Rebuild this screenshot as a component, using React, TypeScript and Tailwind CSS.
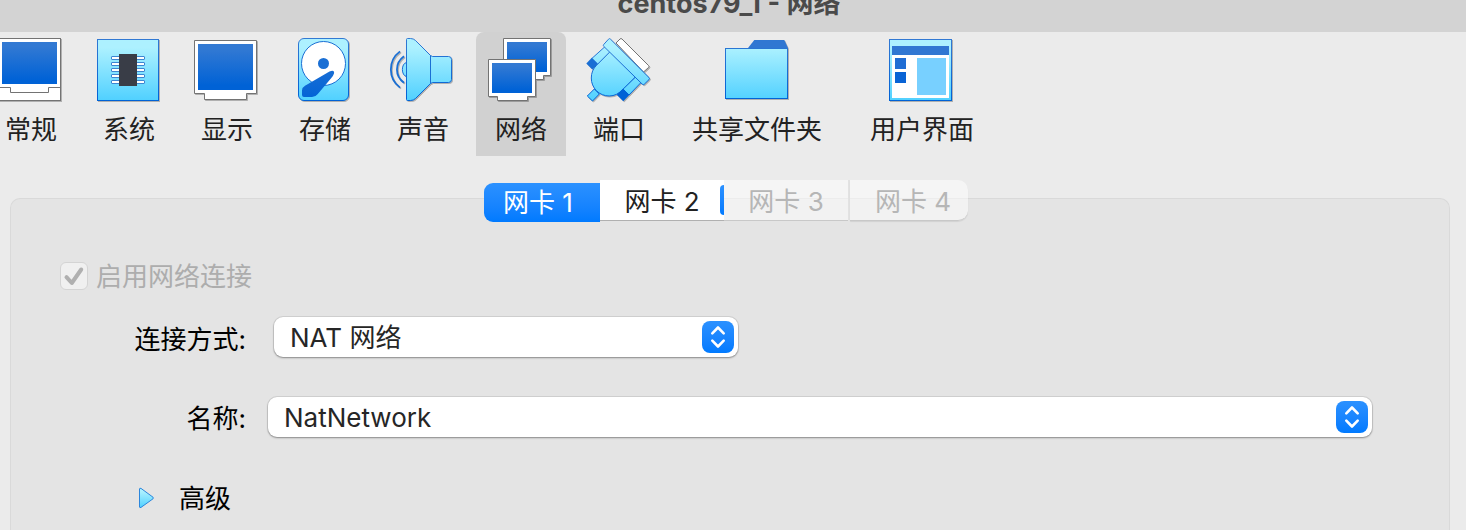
import { useState, type ReactNode } from "react";

const LINE = "#1a6fd4";

function Icon({ children }: { children: ReactNode }) {
  return (
    <svg
      width="64"
      height="64"
      viewBox="0 0 64 64"
      fill="none"
      aria-hidden="true"
      className="shrink-0 overflow-visible drop-shadow-[1px_1px_0px_rgba(0,0,0,0.25)]"
    >
      {children}
    </svg>
  );
}

function Gradients() {
  return (
    <svg width="0" height="0" className="absolute" aria-hidden="true">
      <defs>
        <linearGradient id="sky" gradientUnits="userSpaceOnUse" x1="0" y1="0" x2="0" y2="63">
          <stop offset="0.15" stopColor="#adf1ff" />
          <stop offset="1" stopColor="#4fd0ff" />
        </linearGradient>
        <linearGradient id="edge" gradientUnits="userSpaceOnUse" x1="0" y1="0" x2="0" y2="63">
          <stop offset="0" stopColor="#3279d3" />
          <stop offset="1" stopColor="#0062d6" />
        </linearGradient>
        <linearGradient id="screen" x1="0" y1="0" x2="0" y2="1">
          <stop offset="0.1" stopColor="#3279d3" />
          <stop offset="0.9" stopColor="#0062d6" />
        </linearGradient>
      </defs>
    </svg>
  );
}

function GeneralIcon() {
  return (
    <Icon>
      <rect x="0.5" y="0.5" width="61" height="62" fill="#fff" stroke="#737373" />
      <rect x="3" y="4" width="55" height="42" fill="url(#screen)" />
      <path d="M1 49.5H11.5V54.5H49.5V49.5H61" stroke="#737373" />
    </Icon>
  );
}

function SystemIcon() {
  return (
    <Icon>
      <rect x="0.5" y="1.5" width="61" height="61" fill="url(#sky)" stroke="url(#edge)" />
      {[20, 26, 32, 38, 44].map((y) => (
        <rect key={y} x="14.5" y={y - 1.5} width="33" height="3" rx="0.5" fill="#fff" stroke="#3c86d2" />
      ))}
      <rect x="22" y="16" width="18" height="32" fill="#393d47" />
    </Icon>
  );
}

function DisplayIcon() {
  return (
    <Icon>
      <path d="M-0.5 2.5H61.5V55.5H51.5V61.5H9.5V55.5H-0.5Z" fill="#fff" stroke="#737373" />
      <rect x="3" y="6" width="55" height="46" fill="url(#screen)" />
    </Icon>
  );
}

function StorageIcon() {
  return (
    <Icon>
      <rect x="5.5" y="0.5" width="50" height="62" rx="5.5" fill="url(#sky)" stroke="url(#edge)" />
      <circle cx="30.5" cy="25.5" r="22" fill="#fff" stroke={LINE} />
      <circle cx="30.5" cy="25.5" r="5.5" fill={LINE} />
      <path
        d="M36.5 33.4Q41.8 31.5 41 35.5Q40.4 37.5 38.5 39.8L24.8 56Q22.6 59 19 59H11Q9 59 9 57V52.5Q9 49.5 12 47.8Z"
        fill="url(#edge)"
      />
    </Icon>
  );
}

function AudioIcon() {
  return (
    <Icon>
      <g strokeWidth="1.8" stroke={LINE}>
        <path d="M9 13.4C-3.2 22.5 -3.2 40.5 9 49.6" />
        <path d="M13 18.2C3.6 25 3.6 38 13 44.8" />
      </g>
      <path d="M15.5 24.5C10 25.5 10 37.5 15.5 38.5" fill="url(#sky)" stroke={LINE} />
      <path
        d="M16.5 0.5H19.5Q22.5 0.5 24.5 2.5L39.5 17.5L41.5 18.5H57.5Q60.5 18.5 60.5 21.5V41.5Q60.5 44.5 57.5 44.5H41.5L39.5 45.5L24.5 60.5Q22.5 62.5 19.5 62.5H16.5Q15.5 62.5 15.5 61.5V1.5Q15.5 0.5 16.5 0.5Z"
        fill="url(#sky)"
        stroke="url(#edge)"
      />
      <path d="M39.5 17.5V45.5" stroke={LINE} />
    </Icon>
  );
}

function NetworkIcon() {
  return (
    <Icon>
      <path d="M14.5 0.5H61.5V37.5H54.5V41.5H22.5V37.5H14.5Z" fill="#fff" stroke="#737373" />
      <rect x="18" y="4" width="40" height="30" fill="url(#screen)" />
      <path d="M-0.5 21.5H46.5V58.5H38.5V62.5H8.5V58.5H-0.5Z" fill="#fff" stroke="#737373" />
      <rect x="3" y="25" width="40" height="30" fill="url(#screen)" />
    </Icon>
  );
}

function PortsIcon() {
  return (
    <Icon>
      <path
        d="M29 5L33 1Q34 0 35 1L61.5 27.5Q62.5 28.5 61.5 29.5L56.5 34Z"
        fill="#fff"
        stroke="#737373"
      />
      <g stroke="url(#edge)" fill="url(#sky)">
        <path d="M7.3 51L12.3 56L5.5 63L0.3 58Z" />
        <path d="M18.7 8L24 13L10.7 26.5L4.8 20.5Z" />
        <path d="M49 38.5L54.5 44L42 57L36 51Z" />
        <path d="M23 13.7L9.6 27.2A17.8 17.8 0 0 0 4.3 40A17.8 17.8 0 0 0 22.2 58Q30 58 36 51.2L48.5 38.8Z" />
        <path d="M16.8 6.4L21.5 1.2Q22.5 0 23.5 1.2L62 39.6Q63 40.6 62 41.6L57.3 46.2Q56.3 47.2 55.3 46.2L16.8 8.4Q15.8 7.4 16.8 6.4Z" />
      </g>
      <path d="M4.8 19.8L10.7 25.6L9 28L5.3 31.5L-0.7 25.6Z" fill={LINE} />
      <path d="M36 50.7L42.3 57L36.3 63.2L29.7 56.7Z" fill="#0062d6" />
    </Icon>
  );
}

function FolderIcon() {
  return (
    <Icon>
      <path d="M23 10L29.3 2H59.3L63 10Z" fill="#3077d2" />
      <rect x="0.5" y="10.5" width="62" height="50" fill="url(#sky)" stroke="url(#edge)" />
    </Icon>
  );
}

function InterfaceIcon() {
  return (
    <Icon>
      <rect x="-0.5" y="1.5" width="62" height="61" fill="url(#sky)" stroke="url(#edge)" />
      <rect x="2" y="8" width="57" height="52" fill="#fff" />
      <rect x="2" y="8" width="57" height="9" fill="#3077d2" />
      <rect x="5" y="20" width="11" height="11" fill="#1f6dd4" />
      <rect x="5" y="34" width="11" height="11" fill="#0863d5" />
      <rect x="27" y="20" width="29" height="37" fill="#78d0ff" />
    </Icon>
  );
}

const pages: { label: string; icon: ReactNode; wide?: boolean }[] = [
  { label: "常规", icon: <GeneralIcon /> },
  { label: "系统", icon: <SystemIcon /> },
  { label: "显示", icon: <DisplayIcon /> },
  { label: "存储", icon: <StorageIcon /> },
  { label: "声音", icon: <AudioIcon /> },
  { label: "网络", icon: <NetworkIcon /> },
  { label: "端口", icon: <PortsIcon /> },
  { label: "共享文件夹", icon: <FolderIcon />, wide: true },
  { label: "用户界面", icon: <InterfaceIcon />, wide: true },
];

function Toolbar() {
  const [current, setCurrent] = useState("网络");
  return (
    <nav className="-ml-[14px] flex gap-2">
      {pages.map(({ label, icon, wide }) => (
        <button
          key={label}
          type="button"
          aria-pressed={label === current}
          onClick={() => setCurrent(label)}
          className={`flex shrink-0 flex-col items-center gap-2.5 rounded-t-lg pt-1.5 pb-2 leading-9 text-[#222222] ${
            wide ? "px-5" : "px-[13px]"
          } ${label === current ? "bg-[#d1d1d1]" : ""}`}
        >
          {icon}
          <span>{label}</span>
        </button>
      ))}
    </nav>
  );
}

function Tabs() {
  const disabled =
    "h-[41px] border-b border-[#c8c8c8] bg-white/50 pt-1 leading-9 text-[#b6b6b6]";
  return (
    <div role="tablist" className="relative mr-[14px] flex items-start justify-center">
      <button
        type="button"
        role="tab"
        aria-selected="true"
        className="mt-[3px] h-[39px] w-[116px] rounded-l-[9px] bg-linear-to-b from-[#2b91ff] to-[#007aff] pr-2 leading-9 text-white"
      >
        网卡 1
      </button>
      <button
        type="button"
        role="tab"
        aria-selected="false"
        className="h-[41px] w-[120px] border-b border-[#b0b0b0] bg-white pt-1 pl-1 leading-9 text-[#222222]"
      >
        网卡 2
      </button>
      <span className="flex h-[41px] w-1 border-b border-[#b0b0b0] bg-white pt-[5px] pb-[5px]">
        <span className="w-full rounded-l-[4px] bg-linear-to-b from-[#2b91ff] to-[#007aff]" />
      </span>
      <button type="button" role="tab" aria-selected="false" disabled className={`w-[124px] ${disabled}`}>
        网卡 3
      </button>
      <span className="h-10 w-0.5 bg-[#e2e2e2]" />
      <button
        type="button"
        role="tab"
        aria-selected="false"
        disabled
        className={`w-[118px] rounded-r-[10px] pl-2 shadow-[0_1px_1px_rgba(0,0,0,0.08)] ${disabled}`}
      >
        网卡 4
      </button>
    </div>
  );
}

function Popup({ id, value, className }: { id: string; value: string; className: string }) {
  return (
    <div className={`relative ${className}`}>
      <select
        id={id}
        defaultValue={value}
        className="block h-10 w-full appearance-none rounded-[9px] bg-white pt-0.5 pr-10 pl-4 leading-9 text-[#262626] shadow-[0_0_0_1px_rgba(0,0,0,0.08),0_1px_2px_rgba(0,0,0,0.35)]"
      >
        <option>{value}</option>
      </select>
      <span className="pointer-events-none absolute top-1 right-1 flex size-8 items-center justify-center rounded-[8px] bg-linear-to-b from-[#2b91ff] to-[#007aff]">
        <svg
          width="32"
          height="32"
          viewBox="0 0 32 32"
          fill="none"
          stroke="#fff"
          strokeWidth="2.6"
          strokeLinecap="round"
          strokeLinejoin="round"
          aria-hidden="true"
        >
          <path d="M10.3 12.3L16 6.5L21.7 12.3M10.3 19.7L16 25.5L21.7 19.7" />
        </svg>
      </span>
    </div>
  );
}

function Adapter() {
  const [open, setOpen] = useState(false);
  return (
    <section className="mr-4 -mt-6 ml-[10px] grow rounded-t-[10px] border border-b-0 border-[#d9d9d9] bg-[#e4e4e4] pt-[61px] pr-[77px] pl-[49px]">
      <div className="flex h-8 items-center gap-2 text-[#adadad]">
        <span className="relative flex size-7">
          <input
            id="enable"
            type="checkbox"
            defaultChecked
            disabled
            className="size-7 appearance-none rounded-[6px] border border-[#d4d4d4] bg-[#f0f0f0]"
          />
          <svg
            width="28"
            height="28"
            viewBox="0 0 28 28"
            fill="none"
            stroke="#b0b0b0"
            strokeWidth="4"
            strokeLinecap="round"
            strokeLinejoin="round"
            aria-hidden="true"
            className="pointer-events-none absolute inset-0"
          >
            <path d="M6.5 15.2L11.8 21L21.2 7.5" />
          </svg>
        </span>
        <label htmlFor="enable" className="pt-0.5">
          启用网络连接
        </label>
      </div>
      <div className="mt-[25px] flex h-10 items-center gap-7">
        <label htmlFor="attached" className="w-[186px] shrink-0 pt-1.5 text-right text-black">
          连接方式:
        </label>
        <Popup id="attached" value="NAT 网络" className="w-[464px]" />
      </div>
      <div className="mt-10 flex h-10 items-center gap-[22px]">
        <label htmlFor="name" className="w-[186px] shrink-0 pt-1 text-right text-black">
          名称:
        </label>
        <Popup id="name" value="NatNetwork" className="grow" />
      </div>
      <button
        type="button"
        aria-expanded={open}
        onClick={() => setOpen(!open)}
        className="mt-[42px] ml-[78px] flex items-center gap-6 text-black"
      >
        <svg width="17" height="22" viewBox="0 0 17 22" aria-hidden="true">
          <path
            d="M1.5 2Q1.5 0.8 3 1.4L15 10.2Q15.8 11 15 11.8L3 20.4Q1.5 21 1.5 20Z"
            fill="url(#sky-small)"
            stroke="#2b86dc"
          />
          <defs>
            <linearGradient id="sky-small" x1="0" y1="0" x2="0" y2="1">
              <stop offset="0.15" stopColor="#adf1ff" />
              <stop offset="1" stopColor="#4fd0ff" />
            </linearGradient>
          </defs>
        </svg>
        <span className="pt-0.5">高级</span>
      </button>
    </section>
  );
}

export default function App() {
  return (
    <div className="flex min-h-screen flex-col overflow-hidden bg-[#ebebeb] font-[Inter,'Noto_Sans_CJK_SC',sans-serif] text-[26px] leading-9">
      <Gradients />
      <header className="flex h-8 items-end justify-center overflow-hidden bg-[#d3d3d3] pb-2.5">
        <h1 className="mr-2 text-[27px] font-bold text-[#4a4a4a]">centos79_1 - 网络</h1>
      </header>
      <Toolbar />
      <main className="flex grow flex-col pt-6">
        <Tabs />
        <Adapter />
      </main>
    </div>
  );
}
